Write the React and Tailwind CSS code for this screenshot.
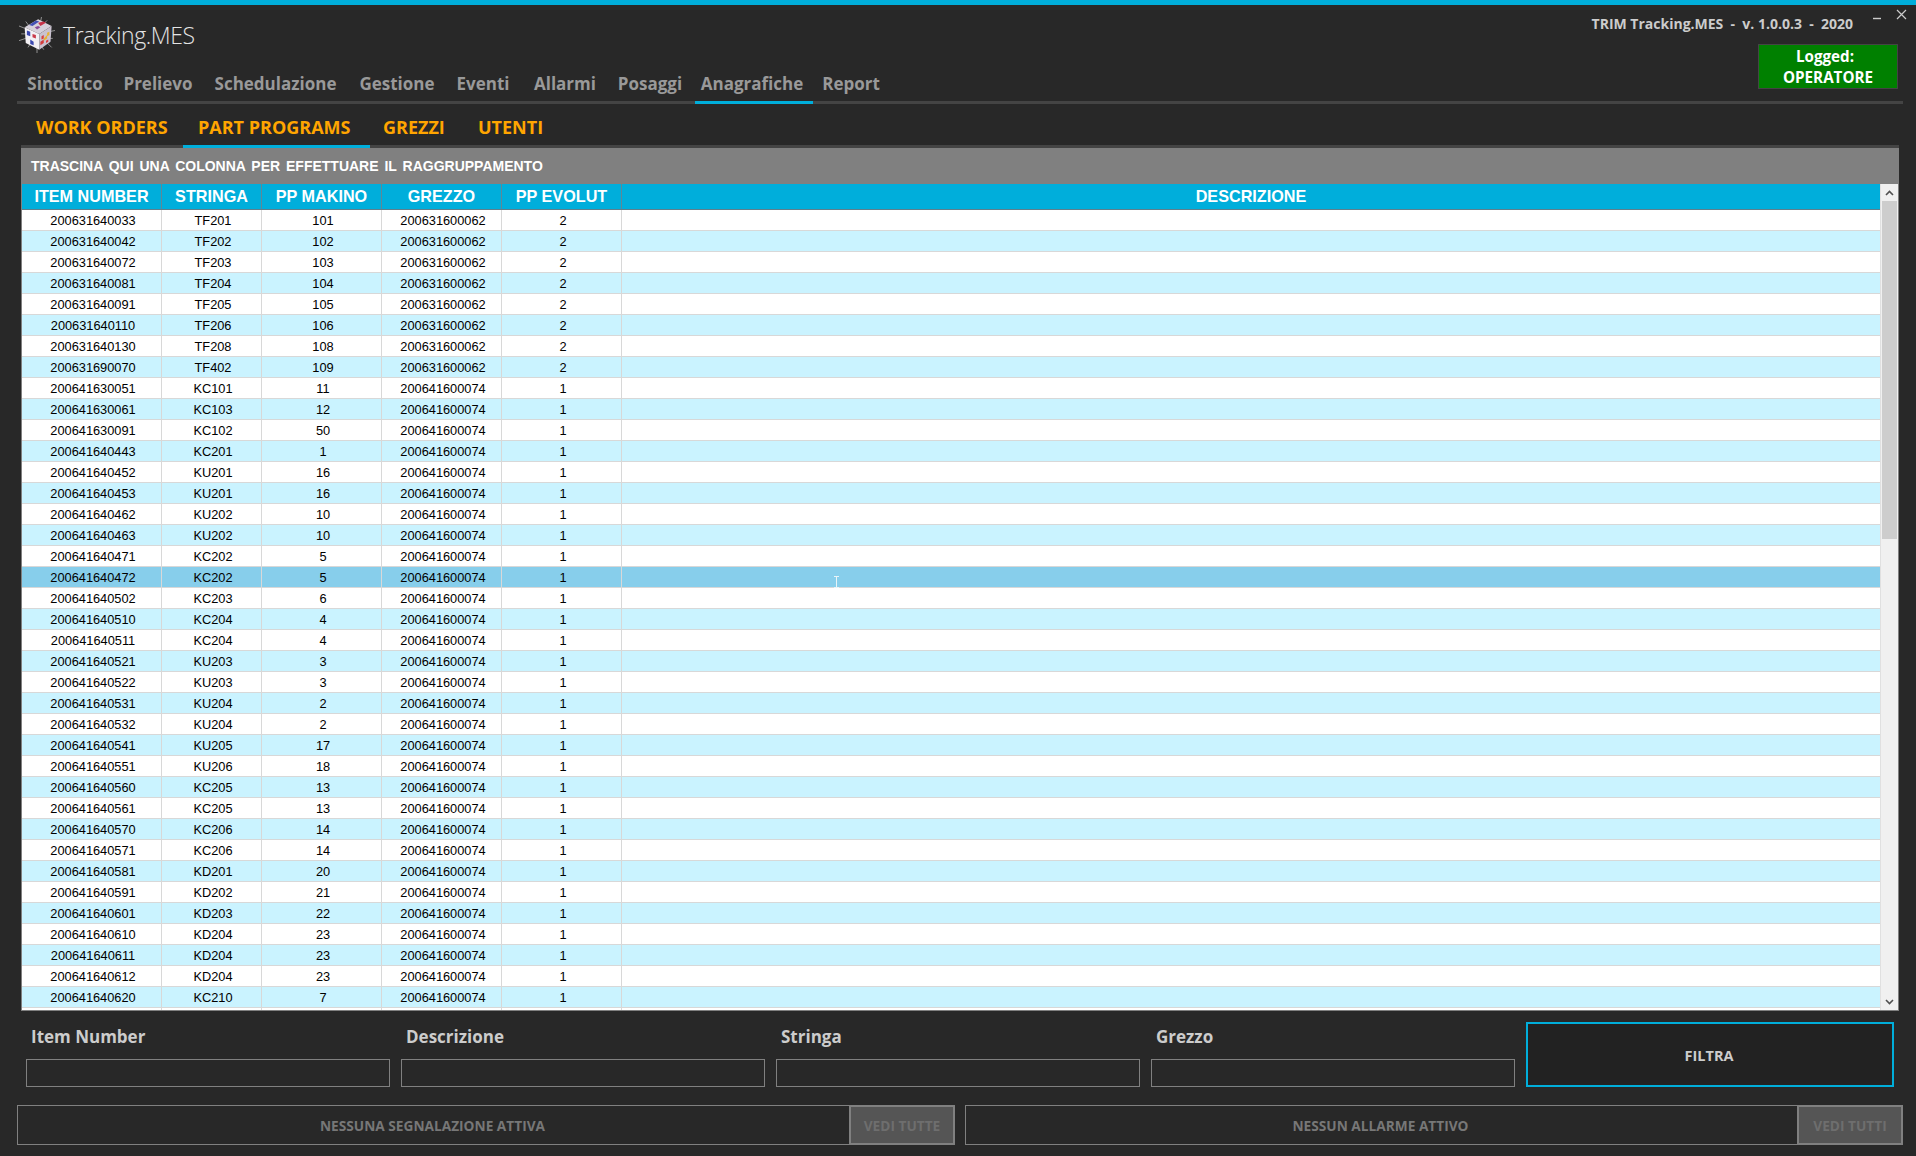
const rows = [
["200631640033","TF201","101","200631600062","2"],
["200631640042","TF202","102","200631600062","2"],
["200631640072","TF203","103","200631600062","2"],
["200631640081","TF204","104","200631600062","2"],
["200631640091","TF205","105","200631600062","2"],
["200631640110","TF206","106","200631600062","2"],
["200631640130","TF208","108","200631600062","2"],
["200631690070","TF402","109","200631600062","2"],
["200641630051","KC101","11","200641600074","1"],
["200641630061","KC103","12","200641600074","1"],
["200641630091","KC102","50","200641600074","1"],
["200641640443","KC201","1","200641600074","1"],
["200641640452","KU201","16","200641600074","1"],
["200641640453","KU201","16","200641600074","1"],
["200641640462","KU202","10","200641600074","1"],
["200641640463","KU202","10","200641600074","1"],
["200641640471","KC202","5","200641600074","1"],
["200641640472","KC202","5","200641600074","1"],
["200641640502","KC203","6","200641600074","1"],
["200641640510","KC204","4","200641600074","1"],
["200641640511","KC204","4","200641600074","1"],
["200641640521","KU203","3","200641600074","1"],
["200641640522","KU203","3","200641600074","1"],
["200641640531","KU204","2","200641600074","1"],
["200641640532","KU204","2","200641600074","1"],
["200641640541","KU205","17","200641600074","1"],
["200641640551","KU206","18","200641600074","1"],
["200641640560","KC205","13","200641600074","1"],
["200641640561","KC205","13","200641600074","1"],
["200641640570","KC206","14","200641600074","1"],
["200641640571","KC206","14","200641600074","1"],
["200641640581","KD201","20","200641600074","1"],
["200641640591","KD202","21","200641600074","1"],
["200641640601","KD203","22","200641600074","1"],
["200641640610","KD204","23","200641600074","1"],
["200641640611","KD204","23","200641600074","1"],
["200641640612","KD204","23","200641600074","1"],
["200641640620","KC210","7","200641600074","1"],
["","","","",""],
];
const widths = ["w-[140px]","w-[100px]","w-[120px]","w-[120px]","w-[120px]"];
const headers = ["ITEM NUMBER","STRINGA","PP MAKINO","GREZZO","PP EVOLUT"];
const nav = [
  ["Sinottico","ml-[5px] w-[86px]"],["Prelievo","ml-[10px] w-[80px]"],["Schedulazione","ml-[10px] w-[135px]"],
  ["Gestione","ml-[11px] w-[86px]"],["Eventi","ml-[11px] w-[64px]"],["Allarmi","ml-[14px] w-[72px]"],
  ["Posaggi","ml-[10px] w-[78px]"],["Anagrafiche","ml-[6px] w-[118px] pr-[4px]"],["Report","ml-[3px] w-[70px]"],
];
const sans = "font-['Open_Sans','Noto_Sans',sans-serif]";
const arial = "font-['Liberation_Sans',Arial,sans-serif]";

function Logo() {
  return (
    <svg width="36" height="36" viewBox="1 1 32 32" className="shrink-0 -ml-[1px]">
      <g stroke="#c4c4c4" strokeWidth="0.6" fill="none">
        <path d="M1 22l6-2M21 1l-1 5M33 13l-5 1M30 28l-4-4M17 33l0-5M7 5l3 4M1 9l5 2M9 28l2-3M26 4l-3 3M3 16l4 0M31 20l-3 0M23 30l-2-3"/>
      </g>
      <path d="M6 10l12-7 12 6-11 7z" fill="#d6d0da"/>
      <path d="M6 10l13 6 0 14-12-6z" fill="#f3f0f4"/>
      <path d="M19 16l11-7-1 14-10 7z" fill="#c9c2cf"/>
      <path d="M10 8l6-4 3 1-6 4z" fill="#4350b4"/>
      <path d="M18 6l5-1 2 1-5 3z" fill="#c8344a"/>
      <path d="M15 10l3-1 2 1-3 2z" fill="#8a4a9a"/>
      <path d="M8 13l3 1 0 4-3-1zM11 21l3 2 0 3-3-1z" fill="#3c49b0"/>
      <path d="M13 16l3 1 0 3-3-1z" fill="#c93a4a"/>
      <path d="M20 23l3-2 0 3-3 2z" fill="#d43b3b"/>
      <path d="M23 20l3-3 0 3-3 2zM26 15l2-1 0 3-2 1z" fill="#e9b132"/>
      <path d="M21 18l2-1 0 3-2 1zM25 22l2-1 0 2-2 1z" fill="#d93f3f"/>
    </svg>
  );
}

export default function App() {
  return (
    <div className={`relative w-[1916px] h-[1156px] overflow-hidden bg-[#282828] ${sans}`}>
      <div className="h-[5px] bg-[#00aedb]" />

      <header className="ml-[17px] mr-[13px] h-[99px] border-b-[3px] border-[#444444] flex justify-between">
        <div className="flex flex-col justify-between">
          <div className="flex items-center h-[48px] pl-[3px] pt-[12px] gap-[8px]">
            <Logo />
            <span className="text-[23px] font-light text-[#e4e4e4] leading-none tracking-[-0.4px]">Tracking.MES</span>
          </div>
          <nav className="flex h-[41px] -mb-[3px]">
            {nav.map(([t, c], i) => (
              <div key={t} className={`${c} h-[41px] pt-[9px] text-center text-[17px] font-bold leading-[24px] text-[#999999] ${i === 7 ? "border-b-[3px] border-[#00aedb]" : ""}`}>{t}</div>
            ))}
          </nav>
        </div>
        <div className="relative flex flex-col items-end">
          <div className="mt-[10px] mr-[50px] text-[14px] font-bold leading-[18px] text-[#cccccc] whitespace-pre">TRIM Tracking.MES  -  v. 1.0.0.3  -  2020</div>
          <div className="mt-[11px] mr-[5px] w-[140px] h-[45px] bg-[#008000] border border-[#444444] text-white text-[15.2px] font-bold leading-[21px] text-center pt-[1px]">
            <div className="pr-[6px]">Logged:</div>
            <div>OPERATORE</div>
          </div>
          <svg width="44" height="20" viewBox="0 0 44 20" className="absolute -top-[0px] right-[-9px]">
            <path d="M5 13.5h8" stroke="#cccccc" strokeWidth="1.4"/>
            <path d="M29 5l9 9M38 5l-9 9" stroke="#cccccc" strokeWidth="1.2"/>
          </svg>
        </div>
      </header>

      <div className="ml-[21px] mr-[17px] h-[44px] border-b-[3px] border-[#444444] flex text-[#ffa500] text-[18px] font-bold leading-[24px]">
        <div className="ml-[15px] w-[147px] pt-[11px]">WORK ORDERS</div>
        <div className="h-[44px] w-[187px] pl-[15px] pt-[11px] border-b-[3px] border-[#00aedb]">PART PROGRAMS</div>
        <div className="ml-[13px] w-[95px] pt-[11px]">GREZZI</div>
        <div className="pt-[11px]">UTENTI</div>
      </div>

      <section className={`ml-[21px] mr-[17px] h-[863px] border-x border-b border-[#808080] bg-white flex flex-col overflow-hidden ${arial}`}>
        <div className="h-[36px] shrink-0 bg-[#808080] flex items-center pl-[9px] text-white text-[14px] font-bold [word-spacing:2px]">
          TRASCINA QUI UNA COLONNA PER EFFETTUARE IL RAGGRUPPAMENTO
        </div>
        <div className="flex flex-1 min-h-0">
          <div className="flex-1 min-w-0 overflow-hidden">
            <div className="flex h-[26px] bg-[#00aedb] border-b border-[#5f7f8c] text-white text-[16.2px] font-bold leading-[25px]">
              {headers.map((h, i) => (
                <div key={h} className={`${widths[i]} shrink-0 border-r border-[#5f8796] text-center`}>{h}</div>
              ))}
              <div className="flex-1 text-center">DESCRIZIONE</div>
            </div>
            {rows.map((r, idx) => {
              const bg = idx === 17 ? "bg-[#87ceeb]" : idx % 2 ? "bg-[#caf3ff]" : "bg-white";
              return (
                <div key={idx} className={`flex h-[21px] border-b border-[#d8d8d8] text-[12.8px] leading-[21px] text-black ${bg}`}>
                  {r.map((c, i) => (
                    <div key={i} className={`${widths[i]} shrink-0 border-r border-[#d8d8d8] pl-[3px] text-center`}>{c}</div>
                  ))}
                  <div className="flex-1" />
                </div>
              );
            })}
          </div>
          <div className="w-[18px] shrink-0 bg-[#f0f0f0] border-l border-[#e0e0e0] flex flex-col items-center">
            <div className="h-[17px] flex items-center justify-center">
              <svg width="9" height="6" viewBox="0 0 9 6"><path d="M1 5l3.5-3.5L8 5" fill="none" stroke="#505050" strokeWidth="1.6"/></svg>
            </div>
            <div className="w-[15px] h-[338px] bg-[#cdcdcd]" />
            <div className="mt-auto h-[17px] flex items-center justify-center">
              <svg width="9" height="6" viewBox="0 0 9 6"><path d="M1 1l3.5 3.5L8 1" fill="none" stroke="#505050" strokeWidth="1.6"/></svg>
            </div>
          </div>
        </div>
      </section>

      <div className="ml-[26px] pt-[11px] h-[94px] flex items-end pb-[18px] gap-[11px]">
        {["Item Number","Descrizione","Stringa","Grezzo"].map((l) => (
          <div key={l} className="w-[364px]">
            <div className="pl-[5px] h-[37px] pt-[3px] text-[17px] font-bold leading-[24px] text-[#cccccc]">{l}</div>
            <div className="h-[28px] border border-[#808080]" />
          </div>
        ))}
        <div className="w-[368px] h-[65px] border-2 border-[#00aedb] bg-[#222222] flex items-center justify-center text-[14.5px] font-bold text-[#cccccc] pr-[2px] pt-[2px]">FILTRA</div>
      </div>

      <div className="ml-[17px] mr-[13px] flex gap-[10px] text-[13.7px] font-bold">
        <div className="flex-1 h-[40px] flex border border-[#808080]">
          <div className="flex-1 flex items-center justify-center text-[#777777] pt-[2px] pr-[2px]">NESSUNA SEGNALAZIONE ATTIVA</div>
          <div className="w-[106px] -my-px -mr-px bg-[#555555] border-2 border-[#808080] flex items-center justify-center text-[#6e6e6e] pt-[2px]">VEDI TUTTE</div>
        </div>
        <div className="flex-1 h-[40px] flex border border-[#808080]">
          <div className="flex-1 flex items-center justify-center text-[#777777] pt-[2px] pr-[2px]">NESSUN ALLARME ATTIVO</div>
          <div className="w-[106px] -my-px -mr-px bg-[#555555] border-2 border-[#808080] flex items-center justify-center text-[#6e6e6e] pt-[2px]">VEDI TUTTI</div>
        </div>
      </div>

      <svg width="7" height="12" viewBox="0 0 7 12" className="absolute left-[833px] top-[576px]">
        <path d="M1 .5h5M3.5.5v11M1 11.5h5" stroke="#e8f4f8" strokeWidth="1" fill="none"/>
      </svg>
    </div>
  );
}
